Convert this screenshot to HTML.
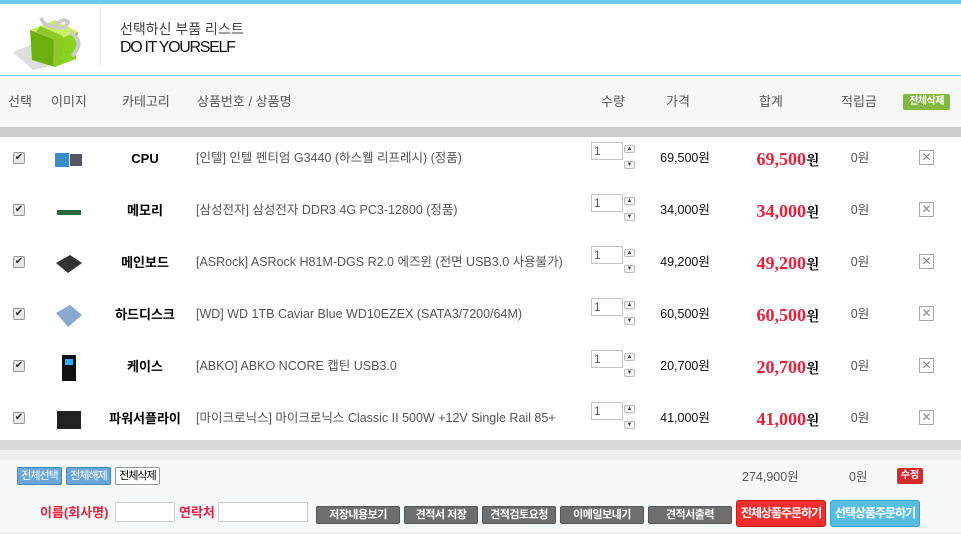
<!DOCTYPE html>
<html><head><meta charset="utf-8"><style>
*{margin:0;padding:0;box-sizing:border-box}
body{width:961px;height:534px;overflow:hidden;background:#fff;font-family:"Liberation Sans","Noto Sans CJK KR",sans-serif;position:relative;font-size:12px;color:#555;line-height:1.2}
div{white-space:nowrap}
.a{position:absolute}
.hd{font-size:13px;color:#555;top:94px}
.row{position:absolute;left:0;width:961px;height:52px}
.cb{position:absolute;left:13px;top:15px;width:12px;height:12px;border:1px solid #999;border-radius:2px;background:#e8e8e8;font-size:10px;line-height:10px;text-align:center;color:#333}
.img{position:absolute;left:54px;top:8px;width:30px;height:30px}
.cat{position:absolute;left:100px;width:90px;text-align:center;top:14px;font-size:13px;font-weight:bold;color:#000}
.nm{position:absolute;left:196px;top:14px;font-size:12.5px;color:#555}
.qt{position:absolute;left:591px;top:5px;width:32px;height:18px;border:1px solid #c4c4c4;font-size:12px;color:#555;padding-left:2px;line-height:16px}
.ar{position:absolute;left:624px;width:11px;height:8px;border:1px solid #bbb;border-radius:2px;background:#f4f4f4;font-size:6px;line-height:6px;text-align:center;color:#445}
.pr{position:absolute;left:640px;width:90px;text-align:center;top:14px;font-size:12.5px;color:#111}
.tot{position:absolute;left:738px;width:100px;text-align:center;top:12px;font-family:"Liberation Serif","Noto Serif CJK SC",serif;font-weight:bold;font-size:18px;color:#e8203a}
.tot span{font-size:14px;color:#000}
.pt{position:absolute;left:840px;width:40px;text-align:center;top:14px;font-size:12.5px;color:#555}
.x{position:absolute;left:919px;top:13px;width:15px;height:15px;border:1px solid #aaa;color:#888;font-size:12px;line-height:12px;text-align:center}
.gb{position:absolute;top:506px;height:18px;background:#6e6e6e;border:1px solid #555;color:#fff;font-weight:bold;font-size:11px;text-align:center;line-height:16px;border-radius:2px;letter-spacing:-0.5px;overflow:hidden}
.sb{position:absolute;top:467px;height:18px;font-size:11px;line-height:16px;text-align:center;border-radius:2px;letter-spacing:-1px;overflow:hidden}
</style></head><body>
<div class="a" style="left:0;top:0;width:961px;height:4px;background:#6ccaf4"></div>
<svg class="a" style="left:8px;top:12px" width="75" height="58" viewBox="0 0 75 58">
<polygon points="5,40 35,28 60,50 25,58" fill="#ddd"/>
<polygon points="22,18 47,8 70,20 48,28" fill="#c8f060"/>
<polygon points="22,18 48,28 47,55 24,48" fill="#6cb010"/>
<polygon points="48,28 70,20 68,47 47,55" fill="#8ad420"/>
<polygon points="32,14 55,24 54,51 45,54 46,27 28,20" fill="#8fc82a"/>
<path d="M33,6 Q38,16 47,14 Q55,5 60,10 Q58,18 47,15" fill="none" stroke="#ccc" stroke-width="4"/>
<path d="M62,20 Q78,30 64,44" fill="none" stroke="#ccc" stroke-width="4"/>
</svg>
<div class="a" style="left:100px;top:6px;width:1px;height:60px;background:#e4e4e4"></div>
<div class="a" style="left:120px;top:21px;font-size:14px;color:#444">선택하신 부품 리스트</div>
<div class="a" style="left:120px;top:38px;font-size:16px;color:#111;letter-spacing:-1.3px">DO IT YOURSELF</div>
<div class="a" style="left:0;top:75px;width:961px;height:1px;background:#7ccaf0"></div>
<div class="a" style="left:0;top:76px;width:961px;height:51px;background:#f7f7f7"></div>
<div class="a hd" style="left:8px">선택</div>
<div class="a hd" style="left:51px">이미지</div>
<div class="a hd" style="left:122px">카테고리</div>
<div class="a hd" style="left:197px">상품번호 / 상품명</div>
<div class="a hd" style="left:601px">수량</div>
<div class="a hd" style="left:666px">가격</div>
<div class="a hd" style="left:759px">합계</div>
<div class="a hd" style="left:841px">적립금</div>
<div class="a" style="left:903px;top:94px;width:47px;height:16px;background:#84b840;border-radius:2px;color:#fff;font-size:10px;font-weight:bold;text-align:center;line-height:16px;letter-spacing:-0.5px">전체삭제</div>
<div class="a" style="left:0;top:127px;width:961px;height:10px;background:#cbcbcb"></div>

<div class="row" style="top:137px"><div class="cb">✔</div><svg class="img" viewBox="0 0 30 30"><rect x="1" y="8" width="14" height="14" fill="#3a8fc8"/><rect x="16" y="9" width="12" height="12" fill="#556"/></svg><div class="cat">CPU</div><div class="nm">[인텔] 인텔 펜티엄 G3440 (하스웰 리프레시) (정품)</div><div class="qt">1</div><div class="ar" style="top:8px">▲</div><div class="ar" style="top:24px">▼</div><div class="pr">69,500원</div><div class="tot">69,500<span>원</span></div><div class="pt">0원</div><div class="x">✕</div></div>
<div class="row" style="top:189px"><div class="cb">✔</div><svg class="img" viewBox="0 0 30 30"><rect x="3" y="13" width="24" height="5" fill="#2a6a3a"/></svg><div class="cat">메모리</div><div class="nm">[삼성전자] 삼성전자 DDR3 4G PC3-12800 (정품)</div><div class="qt">1</div><div class="ar" style="top:8px">▲</div><div class="ar" style="top:24px">▼</div><div class="pr">34,000원</div><div class="tot">34,000<span>원</span></div><div class="pt">0원</div><div class="x">✕</div></div>
<div class="row" style="top:241px"><div class="cb">✔</div><svg class="img" viewBox="0 0 30 30"><polygon points="2,14 16,6 28,14 14,24" fill="#333"/></svg><div class="cat">메인보드</div><div class="nm">[ASRock] ASRock H81M-DGS R2.0 에즈윈 (전면 USB3.0 사용불가)</div><div class="qt">1</div><div class="ar" style="top:8px">▲</div><div class="ar" style="top:24px">▼</div><div class="pr">49,200원</div><div class="tot">49,200<span>원</span></div><div class="pt">0원</div><div class="x">✕</div></div>
<div class="row" style="top:293px"><div class="cb">✔</div><svg class="img" viewBox="0 0 30 30"><polygon points="2,12 16,4 28,14 14,26" fill="#8aa8d0"/></svg><div class="cat">하드디스크</div><div class="nm">[WD] WD 1TB Caviar Blue WD10EZEX (SATA3/7200/64M)</div><div class="qt">1</div><div class="ar" style="top:8px">▲</div><div class="ar" style="top:24px">▼</div><div class="pr">60,500원</div><div class="tot">60,500<span>원</span></div><div class="pt">0원</div><div class="x">✕</div></div>
<div class="row" style="top:345px"><div class="cb">✔</div><svg class="img" viewBox="0 0 30 30"><rect x="8" y="2" width="14" height="26" fill="#111"/><rect x="11" y="6" width="8" height="6" fill="#3af"/></svg><div class="cat">케이스</div><div class="nm">[ABKO] ABKO NCORE 캡틴 USB3.0</div><div class="qt">1</div><div class="ar" style="top:8px">▲</div><div class="ar" style="top:24px">▼</div><div class="pr">20,700원</div><div class="tot">20,700<span>원</span></div><div class="pt">0원</div><div class="x">✕</div></div>
<div class="row" style="top:397px"><div class="cb">✔</div><svg class="img" viewBox="0 0 30 30"><rect x="3" y="6" width="24" height="18" fill="#222"/></svg><div class="cat">파워서플라이</div><div class="nm">[마이크로닉스] 마이크로닉스 Classic II 500W +12V Single Rail 85+</div><div class="qt">1</div><div class="ar" style="top:8px">▲</div><div class="ar" style="top:24px">▼</div><div class="pr">41,000원</div><div class="tot">41,000<span>원</span></div><div class="pt">0원</div><div class="x">✕</div></div>

<div class="a" style="left:0;top:440px;width:961px;height:10px;background:#d9d9d9"></div>
<div class="a" style="left:0;top:450px;width:961px;height:10px;background:#efefef"></div>
<div class="a" style="left:0;top:460px;width:961px;height:71px;background:#f5f9fc"></div>
<div class="a" style="left:0;top:531px;width:961px;height:3px;background:#eee"></div>
<div class="sb" style="left:17px;width:45px;background:#6aa6d8;border:1px solid #4a86b8;color:#fff">전체선택</div>
<div class="sb" style="left:66px;width:45px;background:#6aa6d8;border:1px solid #4a86b8;color:#fff">전체해제</div>
<div class="sb" style="left:115px;width:45px;background:#fff;border:1px solid #999;color:#000">전체삭제</div>
<div class="a" style="left:742px;top:470px;font-size:12.5px">274,900원</div>
<div class="a" style="left:849px;top:470px;font-size:12.5px">0원</div>
<div class="a" style="left:897px;top:468px;width:26px;height:16px;background:#d42a2a;border-radius:2px;color:#fff;font-size:10px;font-weight:bold;text-align:center;line-height:16px">수정</div>
<div class="a" style="left:40px;top:505px;font-size:13px;font-weight:bold;color:#e8203a">이름(회사명)</div>
<div class="a" style="left:115px;top:502px;width:60px;height:20px;border:1px solid #ccc;background:#fff"></div>
<div class="a" style="left:179px;top:505px;font-size:13px;font-weight:bold;color:#e8203a">연락처</div>
<div class="a" style="left:218px;top:502px;width:90px;height:20px;border:1px solid #ccc;background:#fff"></div>
<div class="gb" style="left:316px;width:84px">저장내용보기</div>
<div class="gb" style="left:404px;width:74px">견적서 저장</div>
<div class="gb" style="left:482px;width:74px">견적검토요청</div>
<div class="gb" style="left:560px;width:84px">이메일보내기</div>
<div class="gb" style="left:648px;width:84px">견적서출력</div>
<div class="a" style="left:736px;top:500px;width:90px;height:27px;background:#f42e2e;border:1px solid #c81818;border-radius:3px;color:#fff;font-weight:bold;font-size:12px;letter-spacing:-1px;text-align:center;line-height:25px;overflow:hidden">전체상품주문하기</div>
<div class="a" style="left:830px;top:500px;width:90px;height:27px;background:#58bde0;border:1px solid #3aa0c8;border-radius:3px;color:#fff;font-weight:bold;font-size:12px;letter-spacing:-1px;text-align:center;line-height:25px;overflow:hidden">선택상품주문하기</div>
</body></html>
